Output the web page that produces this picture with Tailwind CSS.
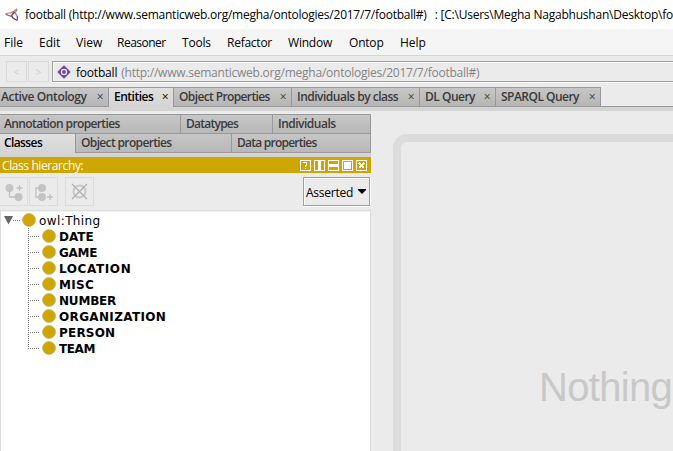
<!DOCTYPE html>
<html lang="en">
<head>
<meta charset="utf-8">
<title>football</title>
<script src="https://cdn.jsdelivr.net/npm/@tailwindcss/browser@4"></script>
</head>
<body class="w-[673px] h-[451px] overflow-hidden bg-[#ebebeb] font-['Open_Sans','Noto_Sans',sans-serif] text-[12px] text-black whitespace-nowrap">
<div class="flex flex-col w-[673px] h-[451px] overflow-hidden">
  <header class="h-[29px] shrink-0 bg-white flex items-center pl-[5px]">
    <svg class="w-[14px] h-[14px] shrink-0" viewBox="0 0 14 14" fill="none" stroke-width="1.3">
      <path d="M6 4.500L8 4L12 .8" stroke="#d9823b" stroke-width="1.500"/><path d="M12.300 1.500L10 5L12.300 8" stroke="#6d9ccc"/><path d="M0 5.800L7.500 4.300" stroke="#d98a60"/><path d="M1 6.500L6.500 8.500" stroke="#8b5a55"/><path d="M9.500 4L6.500 7.500L8 10L12 12.500" stroke="#5f3f8c" stroke-width="1.400"/><path d="M12.300 8V12.500" stroke="#7c4ca8"/>
    </svg>
    <span class="ml-[6px] tracking-[-0.24px]">football (http://www.semanticweb.org/megha/ontologies/2017/7/football#)</span>
    <span class="ml-[8px] tracking-[-0.22px]">: [C:\Users\Megha Nagabhushan\Desktop\fo</span>
  </header>
  <nav class="h-[27px] shrink-0 bg-[#f5f5f5] border-b border-[#d7d7d7] flex items-center pl-[4px] pt-[2px]">
    <span class="w-[35px]">File</span><span class="w-[37px]">Edit</span><span class="w-[41px]">View</span><span class="w-[65px] tracking-[-0.5px]">Reasoner</span><span class="w-[45px] tracking-[-0.2px]">Tools</span><span class="w-[61px] tracking-[-0.25px]">Refactor</span><span class="w-[61px] tracking-[-0.2px]">Window</span><span class="w-[51px] tracking-[-0.2px]">Ontop</span><span>Help</span>
  </nav>
  <div class="h-[31px] shrink-0 flex pl-[6px] pt-[5px]">
    <div class="w-[21px] h-[21px] border border-[#d9d9d9] text-[#cfcfcf] text-[10px] leading-[20px] text-center">&lt;</div>
    <div class="ml-px w-[21px] h-[21px] border border-[#d9d9d9] text-[#cfcfcf] text-[10px] leading-[20px] text-center">&gt;</div>
    <div class="ml-[3px] flex-1 h-[21px] border border-r-0 border-[#a0a0a0] shadow-[0_1px_0_#fff,inset_1px_1px_0_#f8f8f8] flex items-center pl-[4px]">
      <svg class="w-[14px] h-[14px] shrink-0" viewBox="0 0 14 14"><path d="M7 .3L13.7 7L7 13.7L.3 7Z" fill="#6b45a0"/><circle cx="7" cy="7" r="4.500" fill="#6b45a0"/><circle cx="7" cy="7" r="3.200" fill="#ebebeb"/><circle cx="7" cy="7" r="1.900" fill="#6b45a0"/></svg>
      <span class="ml-[5px] pt-[2px] tracking-[-0.2px]">football</span><span class="ml-[4px] pt-[2px] text-[#858585] tracking-[-0.235px]">(http://www.semanticweb.org/megha/ontologies/2017/7/football#)</span>
    </div>
  </div>
  <div class="h-[20px] shrink-0 flex border-b border-[#999] font-semibold text-[12px] tracking-[-0.5px] leading-[18px] text-[#3a3a3a]">
    <div class="w-[109px] flex justify-between pl-px pr-[5px] bg-linear-to-b from-[#c6c6c6] to-[#b6b6b6] border-t border-r border-[#999]"><span class="tracking-[-0.38px]">Active Ontology</span><b class="font-normal">×</b></div>
    <div class="w-[65px] h-[20px] flex justify-between pl-[5px] pr-[5px] bg-linear-to-b from-[#e0e0e0] to-[#d4d4d4] border-t border-r border-[#999] text-black"><span>Entities</span><b class="font-normal">×</b></div>
    <div class="w-[118px] flex justify-between pl-[5px] pr-[5px] bg-linear-to-b from-[#c6c6c6] to-[#b6b6b6] border-t border-r border-[#999]"><span class="tracking-[-0.62px]">Object Properties</span><b class="font-normal">×</b></div>
    <div class="w-[128px] flex justify-between pl-[5px] pr-[5px] bg-linear-to-b from-[#c6c6c6] to-[#b6b6b6] border-t border-r border-[#999]"><span>Individuals by class</span><b class="font-normal">×</b></div>
    <div class="w-[76px] flex justify-between pl-[5px] pr-[5px] bg-linear-to-b from-[#c6c6c6] to-[#b6b6b6] border-t border-r border-[#999]"><span>DL Query</span><b class="font-normal">×</b></div>
    <div class="w-[105px] flex justify-between pl-[5px] pr-[5px] bg-linear-to-b from-[#c6c6c6] to-[#b6b6b6] border-t border-r border-[#999]"><span class="tracking-[-0.52px]">SPARQL Query</span><b class="font-normal">×</b></div>
  </div>
  <div class="h-[4px] shrink-0 bg-[#d4d4d4]"></div>
  <main class="flex flex-1 min-h-0">
    <section class="w-[371px] shrink-0 flex flex-col pt-[3px]">
      <div class="h-[19px] shrink-0 flex font-semibold text-[12px] tracking-[-0.5px] leading-[18px] text-[#3a3a3a]">
        <div class="w-[181px] pl-[4px] bg-linear-to-b from-[#c6c6c6] to-[#b8b8b8] border-t border-r border-[#999] tracking-[-0.62px]">Annotation properties</div>
        <div class="w-[92px] pl-[5px] bg-linear-to-b from-[#c6c6c6] to-[#b8b8b8] border-t border-r border-[#999] tracking-[-0.75px]">Datatypes</div>
        <div class="w-[98px] pl-[5px] bg-linear-to-b from-[#c6c6c6] to-[#b8b8b8] border-t border-r border-[#999]">Individuals</div>
      </div>
      <div class="h-[20px] shrink-0 flex font-semibold text-[12px] tracking-[-0.6px] leading-[18px] text-[#3a3a3a]">
        <div class="w-[76px] pl-[4px] bg-linear-to-b from-[#e0e0e0] to-[#d4d4d4] border-t border-r border-[#999] text-black">Classes</div>
        <div class="w-[156px] pl-[5px] bg-linear-to-b from-[#c6c6c6] to-[#b8b8b8] border-t border-r border-b border-[#999] tracking-[-0.64px]">Object properties</div>
        <div class="w-[139px] pl-[5px] bg-linear-to-b from-[#c6c6c6] to-[#b8b8b8] border-t border-r border-b border-[#999] tracking-[-0.76px]">Data properties</div>
      </div>
      <div class="h-[4px] shrink-0 bg-[#d4d4d4]"></div>
      <div class="h-[16px] shrink-0 bg-[#cfa500] text-white flex items-center justify-between pl-[2px] pr-[4px]">
        <span class="tracking-[-0.4px] pt-px">Class hierarchy:</span>
        <svg class="w-[67px] h-[11px]" viewBox="0 0 67 11" shape-rendering="crispEdges" fill="none" stroke="#fff">
          <rect x=".5" y=".5" width="10" height="10"/><rect x="14.5" y=".5" width="10" height="10"/><rect x="28.5" y=".5" width="10" height="10"/><rect x="42.5" y=".5" width="10" height="10"/><rect x="56.5" y=".5" width="10" height="10"/>
          <path d="M3 2.500H7M6.500 3V5M5 5.500H7M5.500 5V7M5 8.500H6" stroke-width="1"/>
          <path d="M19.500 1V10M29 5.500H38" stroke-width="3"/>
          <rect x="44" y="2" width="7" height="7" fill="#fff" stroke="none"/>
          <path d="M59 3L64 8M64 3L59 8" stroke-width="2"/>
        </svg>
      </div>
      <div class="h-[37px] shrink-0 flex pt-[4px] pr-px">
        <div class="w-[28px] h-[29px] border border-l-0 border-[#dcdcdc] flex items-center justify-center">
          <svg class="w-[18px] h-[18px]" viewBox="0 0 18 18" fill="#c4c4c4"><circle cx="4.500" cy="5" r="4"/><circle cx="13.500" cy="14" r="4"/><path d="M4.500 5V14H13.500M11.500 5H17.500M14.500 2V8" fill="none" stroke="#c0c0c0" stroke-width="1.300"/></svg>
        </div>
        <div class="ml-px w-[29px] h-[29px] border border-[#dcdcdc] flex items-center justify-center">
          <svg class="w-[18px] h-[18px]" viewBox="0 0 18 18" fill="#c4c4c4"><circle cx="7" cy="5" r="4"/><circle cx="7" cy="14" r="4"/><path d="M7 5H1V14H7M12 14H18M15 11V17" fill="none" stroke="#c0c0c0" stroke-width="1.300"/></svg>
        </div>
        <div class="ml-[7px] w-[29px] h-[29px] border border-[#dcdcdc] flex items-center justify-center">
          <svg class="w-[17px] h-[17px]" viewBox="0 0 17 17" fill="none"><circle cx="8.5" cy="8.5" r="6" stroke="#c8c8c8" stroke-width="2"/><path d="M1 1L16 16M16 1L1 16" stroke="#b0b0b0" stroke-width="1.3"/></svg>
        </div>
        <div class="ml-auto w-[67px] h-[29px] border border-[#a0a0a0] shadow-[0_1px_0_#fff,1px_0_0_#fff,inset_1px_1px_0_#fff] flex items-center justify-between pl-[2px] pr-[3px]">
          <span class="tracking-[-0.25px] pt-[2px]">Asserted</span><svg class="w-[8px] h-[5px]" viewBox="0 0 8 5"><path d="M0 0H8V1L4 5L0 1Z"/></svg>
        </div>
      </div>
      <div class="flex-1 bg-white border border-b-0 border-[#dcdcdc] shadow-[inset_0_1px_0_#f4f4f4] font-['DejaVu_Sans',sans-serif] leading-[16px] pt-[1px]">
        <div class="flex items-center h-[16px] pl-[3px]">
          <svg class="w-[32px] h-[16px] shrink-0" viewBox="0 0 32 16"><path d="M0 4H9L4.500 12.500Z" fill="#666"/><path d="M9 8.500H16" stroke="#808080" stroke-dasharray="1 1"/><circle cx="25" cy="8" r="6.500" fill="#cfa500" stroke="#bfb28a" stroke-width=".7"/></svg>
          <span class="ml-[3px] pt-[2px] tracking-[0.4px]">owl:Thing</span>
        </div>
        <div class="relative font-bold">
          <svg class="absolute left-[27px] top-0 w-[28px] h-[128px]" viewBox="0 0 28 128">
            <path d="M.5 0V120M0 8.500H12M0 24.500H12M0 40.500H12M0 56.500H12M0 72.500H12M0 88.500H12M0 104.500H12M0 120.500H12" stroke="#808080" stroke-dasharray="1 1" fill="none"/>
            <g fill="#cfa500" stroke="#bfb28a" stroke-width=".7"><circle cx="21" cy="8" r="6.500"/><circle cx="21" cy="24" r="6.500"/><circle cx="21" cy="40" r="6.500"/><circle cx="21" cy="56" r="6.500"/><circle cx="21" cy="72" r="6.500"/><circle cx="21" cy="88" r="6.500"/><circle cx="21" cy="104" r="6.500"/><circle cx="21" cy="120" r="6.500"/></g>
          </svg>
          <ul class="pl-[58px] pt-px tracking-[0.35px]"><li class="tracking-normal">DATE</li><li class="tracking-[-0.3px]">GAME</li><li class="tracking-[0.6px]">LOCATION</li><li>MISC</li><li class="tracking-[-0.2px]">NUMBER</li><li>ORGANIZATION</li><li class="tracking-[0.2px]">PERSON</li><li class="tracking-[-0.4px]">TEAM</li></ul>
        </div>
      </div>
    </section>
    <section class="flex-1 min-w-0 overflow-hidden pl-[22px] pt-[23px]">
      <div class="w-[500px] h-[500px] border-8 border-[#dcdcdc] rounded-[14px] pl-[138px] pt-[222px] font-['Liberation_Sans',sans-serif] text-[40px] leading-[46px] tracking-[-0.7px] text-[#c8c8c8]">Nothing</div>
    </section>
  </main>
</div>
</body>
</html>
